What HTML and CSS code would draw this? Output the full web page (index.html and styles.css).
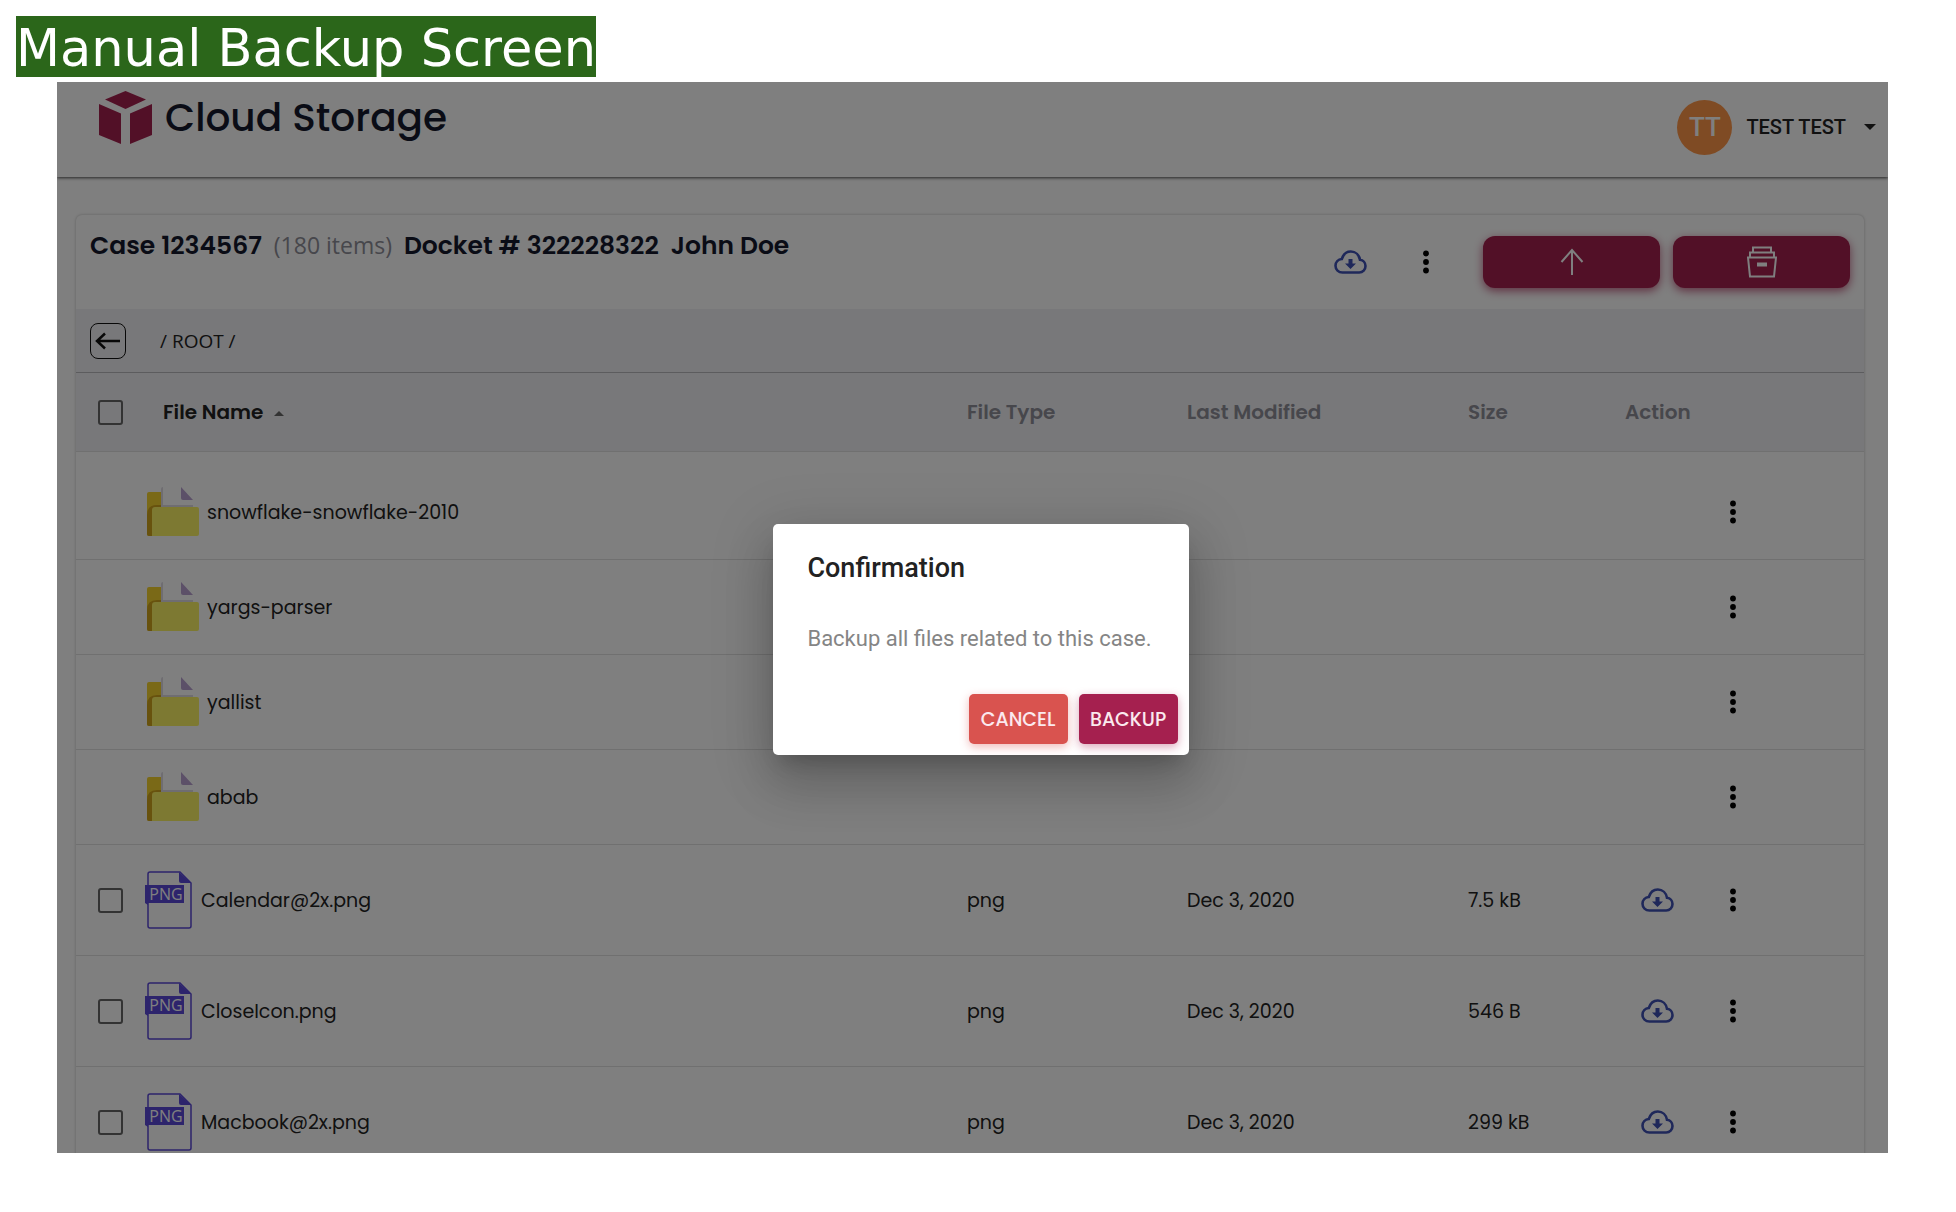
FILE: index.html
```html
<!DOCTYPE html>
<html lang="en">
  <head>
    <meta charset="UTF-8" />
    <meta name="viewport" content="width=device-width, initial-scale=1.0" />
    <title>Manual Backup Screen</title>
    <link rel="stylesheet" href="styles.css">
  </head>
  <body>
    <h1 class="page-title"><span>Manual Backup Screen</span></h1>

    <div class="app">
      <header class="topbar">
        <div class="brand">
          <svg width="53" height="53" viewBox="0 0 53 53" aria-hidden="true">
            <g fill="#a5204f">
              <path d="M26.500 0L47 8.500L26.500 18L6 8.500z" />
              <path d="M0 13L22 22.500V53L0 44z" />
              <path d="M53 13L31 22.500V53L53 44z" />
            </g>
          </svg>
          <span class="brand-name">Cloud Storage</span>
        </div>
        <button class="user" type="button">
          <span class="avatar">TT</span>
          TEST TEST
          <span class="caret"></span>
        </button>
      </header>

      <main class="card">
        <div class="card-head">
          <h2 class="case">
            Case 1234567 <small>(180 items)</small>
            <span>Docket # 322228322</span> <span>John Doe</span>
          </h2>
          <div class="tools">
            <button class="icon-btn" type="button" aria-label="Download all"><svg width="33" height="24"><use href="#cloud" /></svg></button>
            <button class="icon-btn" type="button" aria-label="More"><svg width="8" height="24"><use href="#dots" /></svg></button>
            <button class="big-btn first" type="button" aria-label="Upload">
              <svg width="24" height="28" viewBox="0 0 24 28" fill="none" stroke="#fff" stroke-width="2"><path d="M12 27V2M1.500 14L12 2L22.500 14" /></svg>
            </button>
            <button class="big-btn" type="button" aria-label="Backup">
              <svg width="30" height="32" viewBox="0 0 30 32" fill="none" stroke="#fff" stroke-width="2"><path d="M6 6V1.500H24V6M3 11V6.500H27V11M1 11.500H29L27 30.500H3zM11 17.500H19V19.500H11z" /></svg>
            </button>
          </div>
        </div>

        <nav class="path">
          <button class="back" type="button" aria-label="Back">
            <svg width="26" height="18" viewBox="0 0 26 18" fill="none" stroke="#111" stroke-width="2.500"><path d="M25 9H2M10 1.500L2 9L10 16.500" /></svg>
          </button>
          <span>/ ROOT /</span>
        </nav>

        <table class="files">
          <thead>
            <tr>
              <th class="col-check"><input type="checkbox" aria-label="Select all" /></th>
              <th class="sorted">File Name <span class="sort-arrow"></span></th>
              <th class="col-type">File Type</th>
              <th class="col-date">Last Modified</th>
              <th class="col-size">Size</th>
              <th class="col-action">Action</th>
            </tr>
          </thead>
          <tbody>
            <tr class="folder">
              <td></td>
              <td><a class="name" href="#"><svg width="52" height="50"><use href="#folder" /></svg>snowflake-snowflake-2010</a></td>
              <td></td>
              <td></td>
              <td></td>
              <td><div class="actions"><button class="icon-btn" type="button" aria-label="More"><svg width="8" height="24"><use href="#dots" /></svg></button></div></td>
            </tr>
            <tr class="folder">
              <td></td>
              <td><a class="name" href="#"><svg width="52" height="50"><use href="#folder" /></svg>yargs-parser</a></td>
              <td></td>
              <td></td>
              <td></td>
              <td><div class="actions"><button class="icon-btn" type="button" aria-label="More"><svg width="8" height="24"><use href="#dots" /></svg></button></div></td>
            </tr>
            <tr class="folder">
              <td></td>
              <td><a class="name" href="#"><svg width="52" height="50"><use href="#folder" /></svg>yallist</a></td>
              <td></td>
              <td></td>
              <td></td>
              <td><div class="actions"><button class="icon-btn" type="button" aria-label="More"><svg width="8" height="24"><use href="#dots" /></svg></button></div></td>
            </tr>
            <tr class="folder">
              <td></td>
              <td><a class="name" href="#"><svg width="52" height="50"><use href="#folder" /></svg>abab</a></td>
              <td></td>
              <td></td>
              <td></td>
              <td><div class="actions"><button class="icon-btn" type="button" aria-label="More"><svg width="8" height="24"><use href="#dots" /></svg></button></div></td>
            </tr>
            <tr class="file">
              <td class="col-check"><input type="checkbox" aria-label="Select Calendar@2x.png" /></td>
              <td><a class="name" href="#"><svg width="48" height="60"><use href="#png" /></svg>Calendar@2x.png</a></td>
              <td>png</td>
              <td>Dec 3, 2020</td>
              <td>7.5 kB</td>
              <td><div class="actions"><button class="icon-btn" type="button" aria-label="Download"><svg width="33" height="24"><use href="#cloud" /></svg></button><button class="icon-btn" type="button" aria-label="More"><svg width="8" height="24"><use href="#dots" /></svg></button></div></td>
            </tr>
            <tr class="file">
              <td class="col-check"><input type="checkbox" aria-label="Select CloseIcon.png" /></td>
              <td><a class="name" href="#"><svg width="48" height="60"><use href="#png" /></svg>CloseIcon.png</a></td>
              <td>png</td>
              <td>Dec 3, 2020</td>
              <td>546 B</td>
              <td><div class="actions"><button class="icon-btn" type="button" aria-label="Download"><svg width="33" height="24"><use href="#cloud" /></svg></button><button class="icon-btn" type="button" aria-label="More"><svg width="8" height="24"><use href="#dots" /></svg></button></div></td>
            </tr>
            <tr class="file">
              <td class="col-check"><input type="checkbox" aria-label="Select Macbook@2x.png" /></td>
              <td><a class="name" href="#"><svg width="48" height="60"><use href="#png" /></svg>Macbook@2x.png</a></td>
              <td>png</td>
              <td>Dec 3, 2020</td>
              <td>299 kB</td>
              <td><div class="actions"><button class="icon-btn" type="button" aria-label="Download"><svg width="33" height="24"><use href="#cloud" /></svg></button><button class="icon-btn" type="button" aria-label="More"><svg width="8" height="24"><use href="#dots" /></svg></button></div></td>
            </tr>
          </tbody>
        </table>
      </main>

      <!-- Backup confirmation -->
      <div class="overlay">
        <div class="dialog" role="dialog" aria-labelledby="dialogTitle">
          <h2 id="dialogTitle">Confirmation</h2>
          <p>Backup all files related to this case.</p>
          <div class="dialog-actions">
            <button class="cancel" type="button">CANCEL</button>
            <button class="backup" type="button">BACKUP</button>
          </div>
        </div>
      </div>
    </div>

    <!-- Shared icons -->
    <svg class="sprite" aria-hidden="true">
      <symbol id="cloud" viewBox="0 0 33 24">
        <path d="M8.500 22.500C4.500 22.500 1.500 19.600 1.500 15.800C1.500 12.200 4.200 9.400 7.800 9C9.200 4.600 12.600 1.500 16.800 1.500C21.600 1.500 25.200 5 26 9.800C29.200 10.200 31.500 12.800 31.500 16.100C31.500 19.700 28.800 22.500 25.200 22.500Z" fill="none" stroke="#3f51b5" stroke-width="2.600" />
        <path d="M14.500 9h4v4.500h3.500l-5.500 5.500L11 13.500h3.500z" fill="#3f51b5" />
      </symbol>
      <symbol id="dots" viewBox="0 0 8 24">
        <circle cx="4" cy="3.500" r="2.900" />
        <circle cx="4" cy="12" r="2.900" />
        <circle cx="4" cy="20.500" r="2.900" />
      </symbol>
      <symbol id="folder" viewBox="0 0 52 50">
        <path d="M2 5h18v44H2q-2 0-2-2V7q0-2 2-2z" fill="#f5d32f" />
        <path d="M0 47V28q0-10 10-10h10v31H2q-2 0-2-2z" fill="#d0a41c" />
        <path d="M16 0h18l12 13v12H14V2q0-2 2-2z" fill="#fff" />
        <path d="M16 0v18h30v3H14V2q0-2 2-2z" fill="#dedbe3" />
        <path d="M34 0l12 13H36q-2 0-2-2z" fill="#b8a0d0" />
        <path d="M8 20h42q2 0 2 2v25q0 2-2 2H5V23q0-3 3-3z" fill="#fbf264" />
      </symbol>
      <symbol id="png" viewBox="0 0 48 60">
        <path d="M5 2h30l11 11v43q0 2-2 2H5q-2 0-2-2V4q0-2 2-2z" fill="none" stroke="#5a48d8" stroke-width="1.500" />
        <path d="M34 2l12 11H36q-2 0-2-2z" fill="#5a48d8" />
        <path d="M0 15h39v18H3v2l-3-2z" fill="#5a48d8" />
        <text x="21" y="30" text-anchor="middle" class="png-text">PNG</text>
      </symbol>
    </svg>
  </body>
</html>
```

FILE: styles.css
```css
* {
  box-sizing: border-box;
}

body {
  margin: 0;
  height: 100vh;
  display: flex;
  flex-direction: column;
  background: #fff;
  font-family: "Poppins", "Inter", sans-serif;
  font-size: 19px;
  color: #222;
  overflow: hidden;
}

button {
  padding: 0;
  border: none;
  background: none;
  font-family: inherit;
  color: inherit;
  cursor: pointer;
}

svg {
  display: block;
  flex: none;
}

.sprite {
  display: none;
}

.page-title {
  margin: 16px 16px 5px;
  font-family: Verdana, "DejaVu Sans", sans-serif;
  font-size: 51px;
  font-weight: 400;
  line-height: 57px;
}

.page-title span {
  display: inline-block;
  padding-top: 4px;
  background: #2b661a;
  color: #fff;
}

.app {
  position: relative;
  flex: 1;
  min-height: 0;
  margin: 0 68px 59px 57px;
  background: #fefefe;
  overflow: hidden;
}

/* Top bar */
.topbar {
  display: flex;
  justify-content: space-between;
  align-items: center;
  height: 95px;
  padding: 9px 12px 14px 42px;
  background: #fff;
  box-shadow: 0 1px 3px rgba(0, 0, 0, 0.7);
}

.brand {
  display: flex;
  align-self: flex-start;
  align-items: center;
  gap: 13px;
}

.brand-name {
  font-size: 39px;
  font-weight: 500;
  line-height: 52px;
  color: #15192c;
}

.user {
  display: flex;
  align-items: center;
  gap: 14px;
  font-family: Roboto, sans-serif;
  font-size: 20px;
  font-weight: 500;
}

.avatar {
  width: 55px;
  height: 55px;
  border-radius: 50%;
  background: #ff9648;
  color: #fff;
  font-size: 26px;
  line-height: 55px;
  text-align: center;
}

.caret {
  margin: 0 0 0 4px;
  border: 6px solid transparent;
  border-top-color: #222;
  border-bottom: none;
}

/* Card */
.card {
  margin: 38px 24px 0 19px;
  border-radius: 6px;
  background: #fff;
  box-shadow: 0 0 3px rgba(0, 0, 0, 0.25);
}

.card-head {
  display: flex;
  justify-content: space-between;
  align-items: flex-start;
  height: 94px;
  padding: 21px 14px;
}

.case {
  margin: 0;
  font-size: 25px;
  font-weight: 600;
  line-height: 18px;
  color: #15192c;
}

.case span {
  margin-left: 6px;
}

.case small {
  margin-left: 6px;
  font-family: "Segoe UI", "Open Sans", sans-serif;
  font-size: 23px;
  font-weight: 400;
  color: #8e8e98;
}

.tools {
  display: flex;
  align-items: center;
}

.icon-btn {
  display: flex;
  flex: none;
  justify-content: center;
  width: 76px;
}

.big-btn {
  display: flex;
  justify-content: center;
  align-items: center;
  width: 177px;
  height: 52px;
  margin-left: 13px;
  border-radius: 12px;
  background: #a5204f;
  box-shadow: 0 3px 10px rgba(165, 32, 79, 0.7);
}

.big-btn.first {
  margin-left: 19px;
}

.path {
  display: flex;
  align-items: center;
  gap: 34px;
  height: 64px;
  padding: 0 14px;
  border-bottom: 1px solid #b8b8bc;
  background: #f1f1f4;
  font-family: "Segoe UI", "Open Sans", sans-serif;
}

.back {
  display: flex;
  justify-content: center;
  align-items: center;
  width: 36px;
  height: 36px;
  border: 1px solid #111;
  border-radius: 8px;
}

/* File table */
.files {
  width: 100%;
  border-spacing: 0;
  table-layout: fixed;
}

.files th,
.files td {
  padding: 0;
  border-bottom: 1px solid #e0e0e0;
  text-align: left;
}

.files th {
  height: 79px;
  background: #f1f1f4;
  font-size: 20px;
  font-weight: 600;
  color: #8e8e98;
}

.files .sorted {
  padding-left: 16px;
  color: #222;
}

.sort-arrow {
  display: inline-block;
  margin-left: 6px;
  border: 5px solid transparent;
  border-bottom-color: #666;
  border-top: none;
  vertical-align: middle;
}

.files .col-check {
  width: 71px;
  padding-left: 22px;
}

.col-type {
  width: 220px;
}

.col-date {
  width: 281px;
}

.col-size {
  width: 157px;
}

.col-action {
  width: 239px;
}

.folder td {
  height: 95px;
}

.folder:first-child td {
  height: 108px;
  padding-top: 13px;
}

.file td {
  height: 111px;
}

.files input {
  display: block;
  appearance: none;
  width: 25px;
  height: 25px;
  margin: 0;
  border: 2px solid #666;
  border-radius: 3px;
}

.name {
  display: flex;
  align-items: center;
  gap: 8px;
  color: inherit;
  text-decoration: none;
}

.file .name {
  margin-left: -2px;
}

.png-text {
  font-family: "Segoe UI", "Open Sans", sans-serif;
  font-size: 16px;
  fill: #fff;
}

.actions {
  display: flex;
  align-items: center;
  justify-content: flex-end;
  width: 146px;
}

/* Dialog */
.overlay {
  position: absolute;
  inset: 0;
  display: flex;
  justify-content: center;
  align-items: center;
  padding: 44px 0 0 17px;
  background: rgba(0, 0, 0, 0.5);
}

.dialog {
  padding: 28px 11px 11px 34px;
  border-radius: 5px;
  background: #fff;
  box-shadow: 0 14px 19px -9px rgba(0, 0, 0, 0.2),
    0 30px 48px 4px rgba(0, 0, 0, 0.14), 0 11px 58px 10px rgba(0, 0, 0, 0.12);
  font-family: Roboto, sans-serif;
}

.dialog h2 {
  margin: 0;
  font-size: 27px;
  font-weight: 500;
  line-height: 32px;
}

.dialog p {
  margin: 40px 26px 40px 0;
  font-size: 22px;
  line-height: 30px;
  color: #858585;
}

.dialog-actions {
  display: flex;
  justify-content: flex-end;
  gap: 11px;
  font-family: "Poppins", "Inter", sans-serif;
}

.dialog-actions button {
  width: 99px;
  height: 50px;
  border-radius: 5px;
  color: #fbe9ee;
  font-size: 19px;
  font-weight: 500;
}

.cancel {
  background: #d9534f;
  box-shadow: 0 3px 10px rgba(217, 83, 79, 0.4);
}

.backup {
  background: #a5204f;
  box-shadow: 0 3px 10px rgba(165, 32, 79, 0.4);
}
```
